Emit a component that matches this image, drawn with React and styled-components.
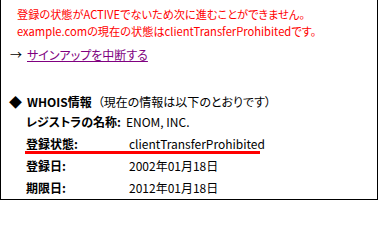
import React from "react";
import styled, { createGlobalStyle } from "styled-components";

const Global = createGlobalStyle`
  html, body { margin: 0; padding: 0; background: #fff; }
  body {
    font-family: "Noto Sans CJK JP", "Noto Sans", sans-serif;
    font-size: 12px;
    color: #000;
    font-feature-settings: "palt";
  }
`;

const Frame = styled.div`
  box-sizing: border-box;
  width: 378px;
  height: 200px;
  border: 1px solid #000;
  border-top: none;
  padding-top: 6px;
  overflow: hidden;
`;

const Message = styled.div`
  padding-left: 16px;
  color: #ff0000;
  font-size: 11.2px;
  line-height: 17px;
`;

const LinkLine = styled.div`
  margin-top: 6px;
  padding-left: 9px;
  line-height: 17px;
  display: flex;
  gap: 4px;
`;

const Arrow = styled.span`
  width: 13px;
`;

const Link = styled.a`
  color: #800080;
  text-decoration: underline;
  cursor: pointer;
`;

const Header = styled.div`
  margin-top: 30px;
  padding-left: 8px;
  line-height: 17px;
  display: flex;
  align-items: center;
`;

const Diamond = styled.span`
  width: 18px;
  font-size: 13px;
`;

const Strong = styled.b`
  font-weight: 700;
`;

const Note = styled.span`
  margin-left: 6px;
`;

const Table = styled.div`
  padding-left: 25px;
  margin-top: 1px;
`;

const Row = styled.div`
  display: grid;
  grid-template-columns: ${(p) => (p.$inline ? "auto 1fr" : "103px 1fr")};
  column-gap: ${(p) => (p.$inline ? "5px" : "0")};
  height: 22px;
  line-height: 22px;
  position: relative;
  ${(p) =>
    p.$marked &&
    `
    &::after {
      content: "";
      position: absolute;
      left: -1px;
      top: 18px;
      width: 235px;
      height: 3px;
      background: #ff0000;
    }
  `}
`;

const Label = styled.span`
  font-weight: 700;
`;

const Value = styled.span``;

export default function App() {
  return (
    <>
      <Global />
      <Frame>
        <Message>
          <div>登録の状態がACTIVEでないため次に進むことができません。</div>
          <div>example.comの現在の状態はclientTransferProhibitedです。</div>
        </Message>
        <LinkLine>
          <Arrow>→</Arrow>
          <Link>サインアップを中断する</Link>
        </LinkLine>
        <Header>
          <Diamond>◆</Diamond>
          <Strong>WHOIS情報</Strong>
          <Note>（現在の情報は以下のとおりです）</Note>
        </Header>
        <Table>
          <Row $inline>
            <Label>レジストラの名称:</Label>
            <Value>ENOM, INC.</Value>
          </Row>
          <Row $marked>
            <Label>登録状態:</Label>
            <Value>clientTransferProhibited</Value>
          </Row>
          <Row>
            <Label>登録日:</Label>
            <Value>2002年01月18日</Value>
          </Row>
          <Row>
            <Label>期限日:</Label>
            <Value>2012年01月18日</Value>
          </Row>
        </Table>
      </Frame>
    </>
  );
}
